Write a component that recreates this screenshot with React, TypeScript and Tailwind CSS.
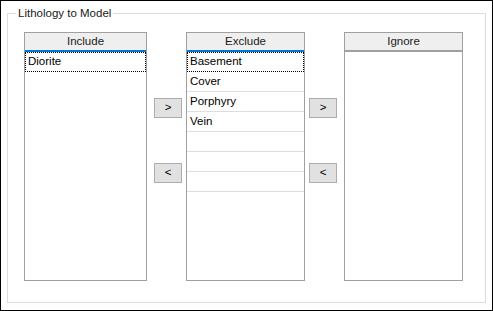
const font = { fontFamily: '"Liberation Sans", Arial, sans-serif' };

function ListBox({
  title,
  items,
  rows = 0,
  width,
  accent = true,
}: {
  title: string;
  items: string[];
  rows?: number;
  width: string;
  accent?: boolean;
}) {
  const lines = Array.from({ length: rows }, (_, i) => items[i] ?? "");
  return (
    <div className={`${width} h-[249px] border border-[#a0a0a0] bg-white flex flex-col`}>
      <div
        className={`h-[19px] bg-[#efefef] border-b-2 ${
          accent ? "border-[#0078d7]" : "border-[#a0a0a0] border-b"
        } flex items-center justify-center text-[11.5px] text-[#1a1a1a] leading-none`}
      >
        {title}
      </div>
      {rows === 0 &&
        items.map((it, i) => (
          <div
            key={i}
            className={`h-[20px] flex items-center pl-[2px] text-[11.5px] leading-none text-black ${
              i === 0 ? "border border-dotted border-black" : ""
            }`}
          >
            {it}
          </div>
        ))}
      {lines.map((it, i) => (
        <div
          key={i}
          className={`h-[20px] flex items-center pl-[2px] text-[11.5px] leading-none text-black ${
            i === 0 ? "border border-dotted border-black" : "border-b border-[#dedede] pl-[3px]"
          }`}
        >
          {it}
        </div>
      ))}
    </div>
  );
}

function MoveButton({ label }: { label: string }) {
  return (
    <button className="w-[28px] h-[20px] bg-[#e1e1e1] border border-[#adadad] text-[11.5px] leading-none text-black flex items-center justify-center">
      {label}
    </button>
  );
}

export default function App() {
  return (
    <div className="w-[493px] h-[311px] bg-white border border-black px-[6px] pt-[5px] pb-[7px]" style={font}>
      <fieldset className="h-full border border-[#dcdcdc] pl-[16px] pt-[12px]">
        <legend className="-ml-[8px] px-[2px] text-[11.5px] leading-[14px] text-[#1a1a1a]">
          Lithology to Model
        </legend>
        <div className="flex">
          <ListBox title="Include" items={["Diorite"]} width="w-[123px]" />
          <div className="w-[39px] pl-[7px] pt-[66px] flex flex-col gap-[45px]">
            <MoveButton label=">" />
            <MoveButton label="<" />
          </div>
          <ListBox
            title="Exclude"
            items={["Basement", "Cover", "Porphyry", "Vein"]}
            rows={7}
            width="w-[119px]"
          />
          <div className="w-[39px] pl-[4px] pt-[66px] flex flex-col gap-[45px]">
            <MoveButton label=">" />
            <MoveButton label="<" />
          </div>
          <ListBox title="Ignore" items={[]} width="w-[119px]" accent={false} />
        </div>
      </fieldset>
    </div>
  );
}
